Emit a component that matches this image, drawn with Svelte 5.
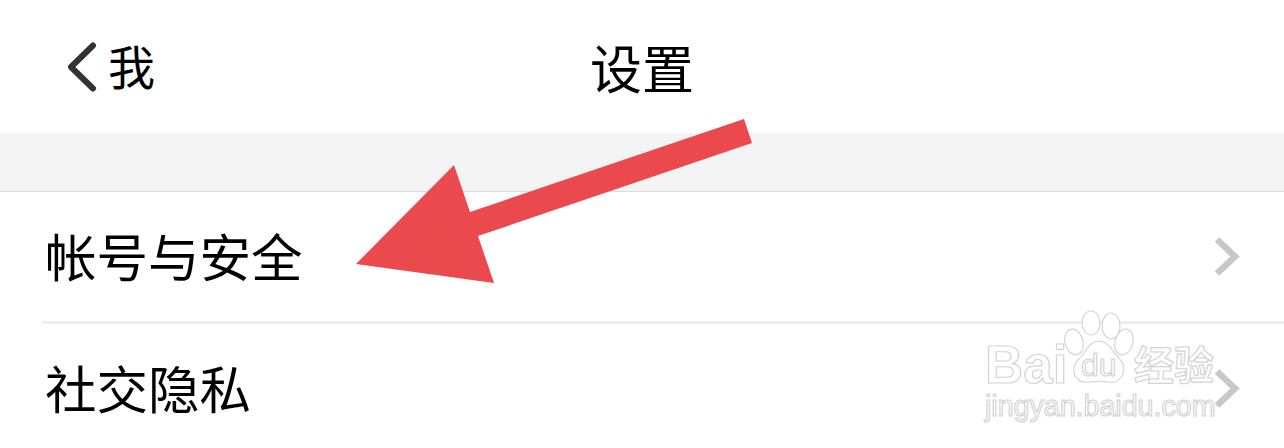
<script>
	const rows = [{ label: '帐号与安全' }, { label: '社交隐私' }];
</script>

<div class="page">
	<header class="nav">
		<div class="back">
			<svg width="36" height="52" viewBox="0 0 36 52" aria-hidden="true">
				<path d="M26 4.500 L4 26 L26 47.500" />
			</svg>
			<span>我</span>
		</div>
		<h1>设置</h1>
		<div></div>
	</header>

	<div class="band"></div>

	<ul class="list">
		{#each rows as row}
			<li>
				<span>{row.label}</span>
				<svg width="26" height="40" viewBox="0 0 26 40" aria-hidden="true">
					<path d="M2 2.500 L20 19.500 L2 36.500" />
				</svg>
			</li>
		{/each}
	</ul>

	<svg class="arrow" width="1284" height="448" viewBox="0 0 1284 448" aria-hidden="true">
		<polygon points="744,119 752,143 478,236 494,283 356,264 454,165 470,212" />
	</svg>

	<div class="watermark" aria-hidden="true">
		<div class="brand">
			<span class="bai">Bai</span>
			<svg class="paw" width="72" height="76" viewBox="0 0 72 76">
				<ellipse cx="27" cy="13" rx="9" ry="12" />
				<ellipse cx="47" cy="16" rx="9" ry="13" />
				<ellipse cx="10" cy="32" rx="9" ry="13" transform="rotate(-15 10 32)" />
				<ellipse cx="60" cy="32" rx="9" ry="13" transform="rotate(15 60 32)" />
				<path d="M35 31 C44 31 48 41 55 48 C65 58 58 74 45 72 C38 71 32 71 25 72 C11 74 5 60 14 50 C22 42 25 31 35 31 Z" />
			</svg>
			<span class="du">du</span>
			<span class="jy">经验</span>
		</div>
		<div class="url">jingyan.baidu.com</div>
	</div>
</div>

<style>
	:global(body) { margin: 0; background: #fff; }
	.page { position: relative; width: 1284px; height: 448px; overflow: hidden; background: #fff; color: #000; font-family: "Noto Sans CJK SC", "Liberation Sans", sans-serif; }
	.nav { display: grid; grid-template-columns: 1fr auto 1fr; align-items: center; height: 133px; }
	.back { display: flex; align-items: center; gap: 5px; padding-left: 67px; font-size: 47px; line-height: 1; }
	.back span { margin-top: -4px; }
	.back svg { fill: none; stroke: #333; stroke-width: 6; stroke-linecap: round; stroke-linejoin: round; }
	h1 { margin: 0; font-size: 52px; font-weight: 400; line-height: 1; }
	.band { height: 58px; background: #f4f4f4; border-bottom: 1px solid #dcdcdc; }
	.list { margin: 0; padding: 0 0 0 42px; list-style: none; }
	.list li { display: flex; align-items: center; justify-content: space-between; height: 129px; padding-right: 43px; border-bottom: 3px solid #eeeeee; font-size: 51.500px; line-height: 1; }
	.list li span { margin-left: 3px; margin-top: -4px; }
	.list svg { fill: none; stroke: #c7c7cc; stroke-width: 6.500; }
	.arrow { position: absolute; left: 0; top: 0; }
	.arrow polygon { fill: #ea4a4e; }
	.watermark { position: absolute; left: 985px; top: 310px; width: 240px; }
	.brand { position: relative; height: 78px; }
	.brand span { position: absolute; color: #fff; -webkit-text-stroke: 1.200px #d4d4d4; font-family: "Liberation Sans", sans-serif; line-height: 1; }
	.bai { left: 0; top: 28px; font-size: 53px; font-weight: 700; }
	.paw { position: absolute; left: 79px; top: 0; fill: #fff; stroke: #d4d4d4; stroke-width: 1.200; }
	.brand .du { left: 96px; top: 39px; font-size: 32px; }
	.brand .jy { left: 149px; top: 33px; font-size: 40px; font-weight: 700; font-family: "Noto Sans CJK SC", sans-serif; }
	.url { margin-top: 1px; color: #fff; -webkit-text-stroke: 1.200px #d4d4d4; font-family: "Liberation Sans", sans-serif; font-size: 28.600px; line-height: 1.200; white-space: nowrap; }
</style>
